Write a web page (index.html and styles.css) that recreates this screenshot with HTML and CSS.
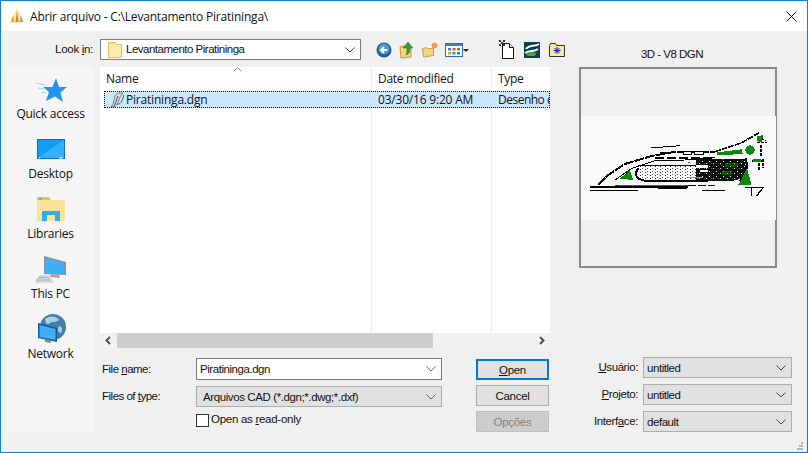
FILE: index.html
```html
<!DOCTYPE html>
<html lang="en">
<head>
    <meta charset="UTF-8">
    <title>Abrir arquivo</title>
    <link rel="stylesheet" href="styles.css">
</head>
<body>
    <div class="window">
        <div class="titlebar">
            <svg class="app-icon" width="16" height="16" viewBox="0 0 16 16">
                <polygon points="8,0 16,15 0,15" fill="#fbe9b4"/>
                <polygon points="8,2 9.500,14 6.500,14" fill="#dc8a10"/>
                <polygon points="4,7 5.500,14 2,14" fill="#eea424"/>
                <polygon points="12,7 14,14 10.500,14" fill="#a8a090"/>
            </svg>
            <span class="title-text">Abrir arquivo - C:\Levantamento Piratininga\</span>
            <svg class="close-icon" width="11" height="11" viewBox="0 0 11 11">
                <path d="M.5 .5l10 10M10.5 .5l-10 10" stroke="#111" fill="none"/>
            </svg>
        </div>

        <div class="dialog">
            <div class="browser">
                <div class="lookin">
                    <label class="lookin-label">Look <u>i</u>n:</label>
                    <div class="combo combo-white combo-lookin">
                        <svg width="14" height="17" viewBox="0 0 14 17">
                            <path d="M.5 1.500h7l1 2h5v13H.5z" fill="#fce08e" stroke="#e0c070"/>
                            <path d="M1 4h12v12H1z" fill="#fde9a9"/>
                        </svg>
                        <span class="combo-text">Levantamento Piratininga</span>
                        <svg class="chevron" width="10" height="6" viewBox="0 0 10 6"><path d="M.5 .5L5 5 9.500 .5" fill="none" stroke="#444"/></svg>
                    </div>
                    <div class="tools">
                        <svg width="16" height="16" viewBox="0 0 16 16">
                            <circle cx="8" cy="8" r="7.500" fill="#1f5f9e"/>
                            <circle cx="8" cy="7" r="5.500" fill="#4d97d8"/>
                            <path d="M11.500 8H6M8 5L5 8l3 3" fill="none" stroke="#fff" stroke-width="2"/>
                        </svg>
                        <svg width="16" height="18" viewBox="0 0 16 18">
                            <path d="M1 6l4-1 1 1h6v10l-10 1z" fill="#f3d77e" stroke="#b89a40"/>
                            <path d="M9 1l5 6h-3c0 4-1 6-4 7 1-2 1-4 1-7H4z" fill="#3c9a34" stroke="#1f6a1f" stroke-width=".5"/>
                        </svg>
                        <svg width="16" height="16" viewBox="0 0 16 16">
                            <path d="M.5 6.500l4-1 1 1h6v7l-10 1.500z" fill="#f3d77e" stroke="#c0a050"/>
                            <circle cx="12.500" cy="3.500" r="2.500" fill="#ef7d22"/>
                            <path d="M12.500 0v7M9 3.500h7M10 1l5 5M15 1l-5 5" stroke="#f5a860" stroke-width=".7"/>
                        </svg>
                        <svg width="24" height="16" viewBox="0 0 24 16">
                            <rect x=".5" y="1.500" width="17" height="13" fill="#fff" stroke="#2a6fc0"/>
                            <rect x="1" y="2" width="16" height="2" fill="#3a80d0"/>
                            <path d="M3 6h3v2.500H3z" fill="#3a80d0"/>
                            <path d="M7.500 6h3v2.500h-3z" fill="#e05030"/>
                            <path d="M12 6h3v2.500h-3z" fill="#50a040"/>
                            <path d="M3 10h3v2.500H3z" fill="#e0a020"/>
                            <path d="M7.500 10h3v2.500h-3z" fill="#3a80d0"/>
                            <path d="M12 10h3v2.500h-3z" fill="#3a80d0"/>
                            <polygon points="18,7 24,7 21,10" fill="#222"/>
                        </svg>
                    </div>
                    <div class="tools tools-extra">
                        <svg width="16" height="19" viewBox="0 0 16 19">
                            <path d="M3.500 3.500h7l4 4v11h-11z" fill="#fff" stroke="#111"/>
                            <path d="M10.500 3.500v4h4" fill="#e8e8e8" stroke="#111"/>
                            <path d="M0 0h2v2H0zM4 0h2v2H4zM2 2h2v2H2zM0 4h2v2H0zM4 4h2v2H4z" fill="#333"/>
                        </svg>
                        <svg width="16" height="16" viewBox="0 0 16 16">
                            <rect width="16" height="16" fill="#123a50"/>
                            <path d="M2 7C5 2 11 5 15 2M1 11c5-3 9-1 13-4" fill="none" stroke="#fff" stroke-width="2"/>
                            <ellipse cx="7" cy="12" rx="5" ry="2" fill="#4fa544"/>
                        </svg>
                        <svg width="16" height="16" viewBox="0 0 16 16">
                            <path d="M.5 3.500l1-2h5l1 2h8v11H.5z" fill="#f7ec9a" stroke="#333"/>
                            <path d="M8 5v7M4.500 8.500h7M5.500 6l5 5M10.500 6l-5 5" stroke="#1414e0"/>
                        </svg>
                    </div>
                </div>

                <div class="panes">
                    <nav class="places">
                        <div class="place">
                            <svg width="32" height="32" viewBox="0 0 32 32">
                                <path d="M1 9l9 2M3 14l6 1M6 19l4-.5" stroke="#9ccdf2" fill="none"/>
                                <polygon points="21,4 24,13 32,13 25.500,18.500 28,28 20,22.500 11,27 14,18 8,13 17.500,13" fill="#2196ea"/>
                            </svg>
                            <span>Quick access</span>
                        </div>
                        <div class="place">
                            <svg width="32" height="32" viewBox="0 0 32 32">
                                <rect x="2.500" y="5.500" width="27" height="19" fill="#129cf5" stroke="#0a6fb8"/>
                                <polygon points="3,24 29,6 29,24" fill="#36b2fb"/>
                                <path d="M4 24h1M24 24h4" stroke="#fff"/>
                            </svg>
                            <span>Desktop</span>
                        </div>
                        <div class="place">
                            <svg width="32" height="32" viewBox="0 0 32 32">
                                <path d="M2 3h12l2 3h14v21H2z" fill="#fde39a"/>
                                <path d="M2 3h12l2 3H2z" fill="#f0c050"/>
                                <rect x="4" y="4" width="3" height="1.500" fill="#3aa8e8"/>
                                <path d="M7 27V17h18v10h-5v-6h-8v6z" fill="#2ab0ee"/>
                            </svg>
                            <span>Libraries</span>
                        </div>
                        <div class="place">
                            <svg width="32" height="32" viewBox="0 0 32 32">
                                <polygon points="9,2 31,8 31,21 9,20" fill="#8a8f96"/>
                                <polygon points="10.500,4 29.500,9 29.500,20 10.500,19" fill="#3fb0f8"/>
                                <polygon points="16,20 24,21 25,24 15,23" fill="#a0a4a8"/>
                                <polygon points="5,21 14,21 19,29 -1,29" fill="#d8d8d8"/>
                                <path d="M3 23.500h11M1.500 26h14" stroke="#aaa"/>
                            </svg>
                            <span>This PC</span>
                        </div>
                        <div class="place">
                            <svg width="32" height="32" viewBox="0 0 32 32">
                                <circle cx="18" cy="13" r="13" fill="#3f7fa8"/>
                                <path d="M10 5c5-4 12-3 14 1-3 3-7 1-9 3s-4 2-5-4zM24 12c3 0 4 3 2 7-3 0-4-4-2-7z" fill="#a8d0e8"/>
                                <polygon points="3,9 22,14 22,28 3,24" fill="#155a90"/>
                                <polygon points="4.500,11 20.500,15 20.500,26 4.500,23" fill="#3fb0f8"/>
                                <path d="M10 25l6 2v2l-6-1z" fill="#888"/>
                            </svg>
                            <span>Network</span>
                        </div>
                    </nav>

                    <div class="files">
                        <div class="list">
                            <div class="list-head">
                                <span class="col-name">Name</span>
                                <span class="col-date">Date modified</span>
                                <span class="col-type">Type</span>
                                <svg class="sort-arrow" width="9" height="5" viewBox="0 0 9 5"><path d="M.5 4.500l4-4 4 4" fill="none" stroke="#888"/></svg>
                            </div>
                            <div class="list-row">
                                <span class="col-name name-cell">
                                    <svg width="16" height="16" viewBox="0 0 16 16">
                                        <path d="M1 15c3-3 3-8 4-11 1-3 4-3 8-3-2 2-3 4-4 7-1 3-3 7-8 7z" fill="#d8dde2" stroke="#555" stroke-width=".7"/>
                                        <path d="M4 15L8 4M7 12c3 1 5-2 7-9" fill="none" stroke="#556" stroke-width="1"/>
                                    </svg>
                                    Piratininga.dgn
                                </span>
                                <span class="col-date">03/30/16 9:20 AM</span>
                                <span class="col-type">Desenho do MicroStation</span>
                            </div>
                        </div>
                        <div class="scrollbar">
                            <svg width="17" height="15" viewBox="0 0 17 15"><path d="M10 4L6.500 7.500 10 11" fill="none" stroke="#505050" stroke-width="2"/></svg>
                            <div class="thumb"></div>
                            <svg class="scroll-right" width="17" height="15" viewBox="0 0 17 15"><path d="M7 4l3.500 3.500L7 11" fill="none" stroke="#505050" stroke-width="2"/></svg>
                        </div>
                        <div class="form">
                            <div class="fields">
                                <div class="field">
                                    <label class="field-label">File <u>n</u>ame:</label>
                                    <div class="combo combo-white combo-file combo-name">
                                        <span class="combo-text">Piratininga.dgn</span>
                                        <svg class="chevron" width="10" height="6" viewBox="0 0 10 6"><path d="M.5 .5L5 5 9.500 .5" fill="none" stroke="#666"/></svg>
                                    </div>
                                </div>
                                <div class="field">
                                    <label class="field-label">Files of <u>t</u>ype:</label>
                                    <div class="combo combo-file combo-type">
                                        <span class="combo-text">Arquivos CAD (*.dgn;*.dwg;*.dxf)</span>
                                        <svg class="chevron" width="10" height="6" viewBox="0 0 10 6"><path d="M.5 .5L5 5 9.500 .5" fill="none" stroke="#666"/></svg>
                                    </div>
                                </div>
                                <div class="readonly">
                                    <span class="checkbox"></span>
                                    <span>Open as <u>r</u>ead-only</span>
                                </div>
                            </div>
                            <div class="buttons">
                                <button class="btn btn-default"><u>O</u>pen</button>
                                <button class="btn">Cancel</button>
                                <button class="btn btn-disabled">Opções</button>
                            </div>
                        </div>
                    </div>
                </div>
            </div>

            <div class="side">
                <div class="preview-title">3D - V8 DGN</div>
                <div class="preview">
                    <div class="preview-image">
                        <svg width="195" height="104" viewBox="18 48 585 312" shape-rendering="crispEdges">
                            <defs>
                                <pattern id="dots" width="15" height="9" patternUnits="userSpaceOnUse">
                                    <rect width="15" height="9" fill="#fff"/>
                                    <rect width="3" height="3" fill="#222"/>
                                    <rect x="6" y="6" width="3" height="3" fill="#555"/>
                                </pattern>
                                <pattern id="rough" width="21" height="15" patternUnits="userSpaceOnUse">
                                    <rect width="21" height="15" fill="#0c0c0c"/>
                                    <rect x="3" y="3" width="3" height="3" fill="#fff"/>
                                    <rect x="15" y="9" width="3" height="3" fill="#ddd"/>
                                    <rect x="9" y="9" width="3" height="3" fill="#1a7a1a"/>
                                </pattern>
                            </defs>
                            <rect x="190" y="198" width="172" height="42" fill="url(#dots)"/>
                            <path d="M362 178h148v55l-40 10H362z" fill="url(#rough)"/>
                            <path d="M362 195h36v9h-36zM375 210h24v6h-24z" fill="#fff"/>
                            <path d="M450 190h40v12h-40zM440 212h30v12h-30z" fill="#0a8a0a" opacity=".55"/>
                            <g fill="none" stroke="#000">
                                <path d="M45 260H340" stroke-width="6"/>
                                <path d="M45 272H190M250 266H335M380 272H450" stroke-width="3"/>
                                <path d="M340 257H420" stroke-width="3" stroke-dasharray="24 6"/>
                                <path d="M70 255L100 225 150 192 230 168 290 157 420 155" stroke-width="6" stroke-dasharray="30 3"/>
                                <path d="M420 155L500 128 555 97" stroke-width="5" stroke-dasharray="18 3"/>
                                <path d="M228 144L315 137" stroke-width="3"/>
                                <path d="M255 158H285" stroke-width="6"/>
                                <path d="M120 240L170 205 240 182 330 180 420 172" stroke-width="3"/>
                                <path d="M240 174H420" stroke-width="6" stroke-dasharray="27 9"/>
                                <path d="M190 205C175 225 185 238 210 242H400" stroke-width="6"/>
                                <path d="M190 196H362" stroke-width="3"/>
                                <path d="M512 175C520 200 512 225 495 245" stroke-width="7"/>
                                <path d="M340 232H385" stroke="#b0a020" stroke-width="3"/>
                                <path d="M530 288V262M545 288L565 262M510 262H560" stroke-width="4"/>
                                <path d="M552 190V212M565 178V205M530 182H560" stroke-width="6" stroke-dasharray="9 3"/>
                                <path d="M548 110L572 122M545 128H575M558 135V170" stroke-width="4" stroke-dasharray="9 3"/>
                                <path d="M120 255H340" stroke="#0a8a0a" stroke-width="3"/>
                            </g>
                            <path d="M325 155h25v9h-25zM358 154h27v10h-27z" fill="#fff" stroke="#000" stroke-width="3"/>
                            <g fill="#0a8a0a">
                                <polygon points="135,236 165,210 175,240"/>
                                <polygon points="490,256 516,205 530,256"/>
                                <circle cx="525" cy="150" r="14"/>
                                <polygon points="425,157 500,148 503,162 425,166"/>
                                <polygon points="545,110 565,105 560,125 548,125"/>
                                <rect x="535" y="178" width="22" height="9"/>
                            </g>
                            <g fill="#e01010">
                                <rect x="440" y="177" width="6" height="3"/>
                                <rect x="340" y="185" width="6" height="3"/>
                                <rect x="490" y="252" width="6" height="3"/>
                            </g>
                            <g fill="#1010d0">
                                <rect x="122" y="254" width="6" height="3"/>
                                <rect x="415" y="254" width="6" height="3"/>
                            </g>
                        </svg>
                    </div>
                </div>
                <div class="extras">
                    <div class="extra">
                        <label class="extra-label"><u>U</u>suário:</label>
                        <div class="combo combo-extra">
                            <span class="combo-text">untitled</span>
                            <svg class="chevron" width="10" height="6" viewBox="0 0 10 6"><path d="M.5 .5L5 5 9.500 .5" fill="none" stroke="#444"/></svg>
                        </div>
                    </div>
                    <div class="extra">
                        <label class="extra-label"><u>P</u>rojeto:</label>
                        <div class="combo combo-extra">
                            <span class="combo-text">untitled</span>
                            <svg class="chevron" width="10" height="6" viewBox="0 0 10 6"><path d="M.5 .5L5 5 9.500 .5" fill="none" stroke="#444"/></svg>
                        </div>
                    </div>
                    <div class="extra">
                        <label class="extra-label">Interf<u>a</u>ce:</label>
                        <div class="combo combo-extra">
                            <span class="combo-text">default</span>
                            <svg class="chevron" width="10" height="6" viewBox="0 0 10 6"><path d="M.5 .5L5 5 9.500 .5" fill="none" stroke="#444"/></svg>
                        </div>
                    </div>
                </div>
            </div>
        </div>

        <svg class="grip" width="6" height="8" viewBox="0 0 6 8">
            <path d="M4 0h2v2H4zM2 3h2v2H2zM4 3h2v2H4zM0 6h2v2H0zM2 6h2v2H2zM4 6h2v2H4z" fill="#b5b5b5"/>
        </svg>
    </div>
</body>
</html>
```

FILE: styles.css
```css
body {
    margin: 0;
    font-family: "Open Sans", sans-serif;
    font-size: 12px;
    color: #111;
}
u {
    text-underline-offset: 1px;
}
.window {
    position: relative;
    box-sizing: border-box;
    width: 808px;
    height: 453px;
    border: 1px solid #0f7fd6;
    background-color: #f0f0f0;
    display: flex;
    flex-direction: column;
    overflow: hidden;
}
.titlebar {
    height: 30px;
    flex: none;
    background-color: #fff;
    display: flex;
    align-items: center;
    padding: 0 10px 0 8px;
}
.app-icon {
    margin-right: 5px;
}
.title-text {
    flex: 1;
    letter-spacing: -0.2px;
}
.dialog {
    flex: 1;
    display: flex;
    gap: 14px;
    padding: 8px 15px 20px 6px;
    min-height: 0;
}
.browser {
    width: 558px;
    flex: none;
    display: flex;
    flex-direction: column;
}
.lookin {
    display: flex;
    align-items: center;
    height: 21px;
    margin-bottom: 7px;
}
.lookin-label {
    width: 86px;
    margin-right: 7px;
    padding-bottom: 2px;
    text-align: right;
    font: 11.5px "Liberation Sans", sans-serif;
    letter-spacing: -0.3px;
}
.combo {
    box-sizing: border-box;
    display: flex;
    align-items: center;
    border: 1px solid #adadad;
    background-color: #e1e1e1;
}
.combo-text {
    flex: 1;
    white-space: nowrap;
    font: 11.5px "Liberation Sans", sans-serif;
    letter-spacing: -0.45px;
}
.chevron {
    flex: none;
    margin: 0 5px 0 4px;
}
.combo-white {
    background-color: #fff;
    border-color: #7a7a7a;
}
.combo-lookin {
    width: 261px;
    height: 21px;
    padding-left: 7px;
}
.combo-lookin .combo-text {
    margin-left: 4px;
    padding-bottom: 1px;
    letter-spacing: -0.5px;
}
.tools {
    display: flex;
    align-items: center;
    gap: 7px;
    margin-left: 15px;
}
.tools-extra {
    gap: 9px;
    margin-left: 30px;
}
.panes {
    flex: 1;
    display: flex;
    gap: 6px;
    min-height: 0;
}
.places {
    width: 87px;
    flex: none;
    background-color: #f5f5f5;
    padding-top: 7px;
}
.place {
    height: 60px;
    display: flex;
    flex-direction: column;
    align-items: center;
    letter-spacing: -0.25px;
    line-height: 16px;
}
.files {
    width: 450px;
    flex: none;
    display: flex;
    flex-direction: column;
}
.list {
    height: 266px;
    flex: none;
    background-color: #fff;
    background-image: linear-gradient(#e8edf3, #e8edf3), linear-gradient(#e8edf3, #e8edf3);
    background-size: 1px 100%;
    background-position: 271px 0, 391px 0;
    background-repeat: no-repeat;
    overflow: hidden;
}
.list-head {
    position: relative;
    display: flex;
    align-items: center;
    box-sizing: border-box;
    height: 24px;
    padding-bottom: 2px;
    letter-spacing: -0.3px;
}
.sort-arrow {
    position: absolute;
    left: 133px;
    top: 0;
}
.col-name {
    width: 272px;
    flex: none;
    box-sizing: border-box;
    padding-left: 6px;
}
.col-date {
    width: 120px;
    flex: none;
    box-sizing: border-box;
    padding-left: 6px;
    white-space: nowrap;
}
.col-type {
    width: 58px;
    flex: none;
    box-sizing: border-box;
    padding-left: 6px;
    white-space: nowrap;
    overflow: hidden;
}
.list-row {
    display: flex;
    align-items: center;
    box-sizing: border-box;
    height: 17px;
    margin-left: 4px;
    background-color: #cce8ff;
    outline: 1px dotted #111;
    outline-offset: -1px;
    letter-spacing: -0.2px;
}
.list-row .col-name {
    width: 268px;
}
.list-row .col-type {
    letter-spacing: -0.5px;
}
.name-cell {
    display: flex;
    align-items: center;
}
.scrollbar {
    height: 15px;
    flex: none;
    display: flex;
    align-items: center;
}
.thumb {
    width: 316px;
    height: 15px;
    background-color: #cdcdcd;
}
.scroll-right {
    margin-left: auto;
}
.form {
    flex: 1;
    display: flex;
    gap: 34px;
    padding-top: 10px;
}
.fields {
    width: 342px;
    flex: none;
    display: flex;
    flex-direction: column;
    gap: 6px;
}
.field {
    display: flex;
    align-items: center;
}
.field-label {
    width: 94px;
    flex: none;
    padding-left: 2px;
    padding-bottom: 1px;
    font: 11.5px "Liberation Sans", sans-serif;
    letter-spacing: -0.5px;
}
.combo-file {
    width: 246px;
    height: 21px;
    padding-left: 3px;
}
.combo-name {
    height: 22px;
}
.combo-type {
    padding-left: 6px;
}
.combo-type .combo-text {
    letter-spacing: -0.4px;
}
.readonly {
    display: flex;
    align-items: center;
    gap: 2px;
    margin-left: 96px;
    font: 11.5px "Liberation Sans", sans-serif;
    letter-spacing: -0.28px;
}
.readonly span:last-child {
    padding-bottom: 2px;
}
.checkbox {
    width: 13px;
    height: 13px;
    box-sizing: border-box;
    border: 1px solid #333;
    background-color: #fff;
}
.buttons {
    width: 73px;
    flex: none;
    display: flex;
    flex-direction: column;
    gap: 5px;
    padding-top: 1px;
}
.btn {
    height: 21px;
    padding: 0;
    border: 1px solid #adadad;
    background-color: #e1e1e1;
    font: 11.5px "Liberation Sans", sans-serif;
    letter-spacing: -0.3px;
    color: #111;
}
.btn-default {
    border: 2px solid #0078d7;
}
.btn-disabled {
    background-color: #ccc;
    border-color: #bfbfbf;
    color: #838383;
}
.side {
    flex: 1;
    display: flex;
    flex-direction: column;
}
.preview-title {
    width: 186px;
    height: 28px;
    text-align: center;
    font: 11.5px/30px "Liberation Sans", sans-serif;
    letter-spacing: -0.5px;
}
.preview {
    box-sizing: border-box;
    width: 198px;
    height: 201px;
    border: 2px solid #8a8a8a;
    display: flex;
    align-items: center;
    justify-content: center;
}
.preview-image {
    display: flex;
    background-color: #f8f8f8;
}
.extras {
    margin-top: auto;
    display: flex;
    flex-direction: column;
    gap: 6px;
}
.extra {
    display: flex;
    align-items: center;
    gap: 5px;
}
.extra-label {
    width: 59px;
    padding-bottom: 1px;
    text-align: right;
    font: 11.5px "Liberation Sans", sans-serif;
    letter-spacing: -0.4px;
}
.combo-extra {
    width: 149px;
    height: 21px;
    padding-left: 3px;
}
.grip {
    position: absolute;
    right: 4px;
    bottom: 2px;
}
```
